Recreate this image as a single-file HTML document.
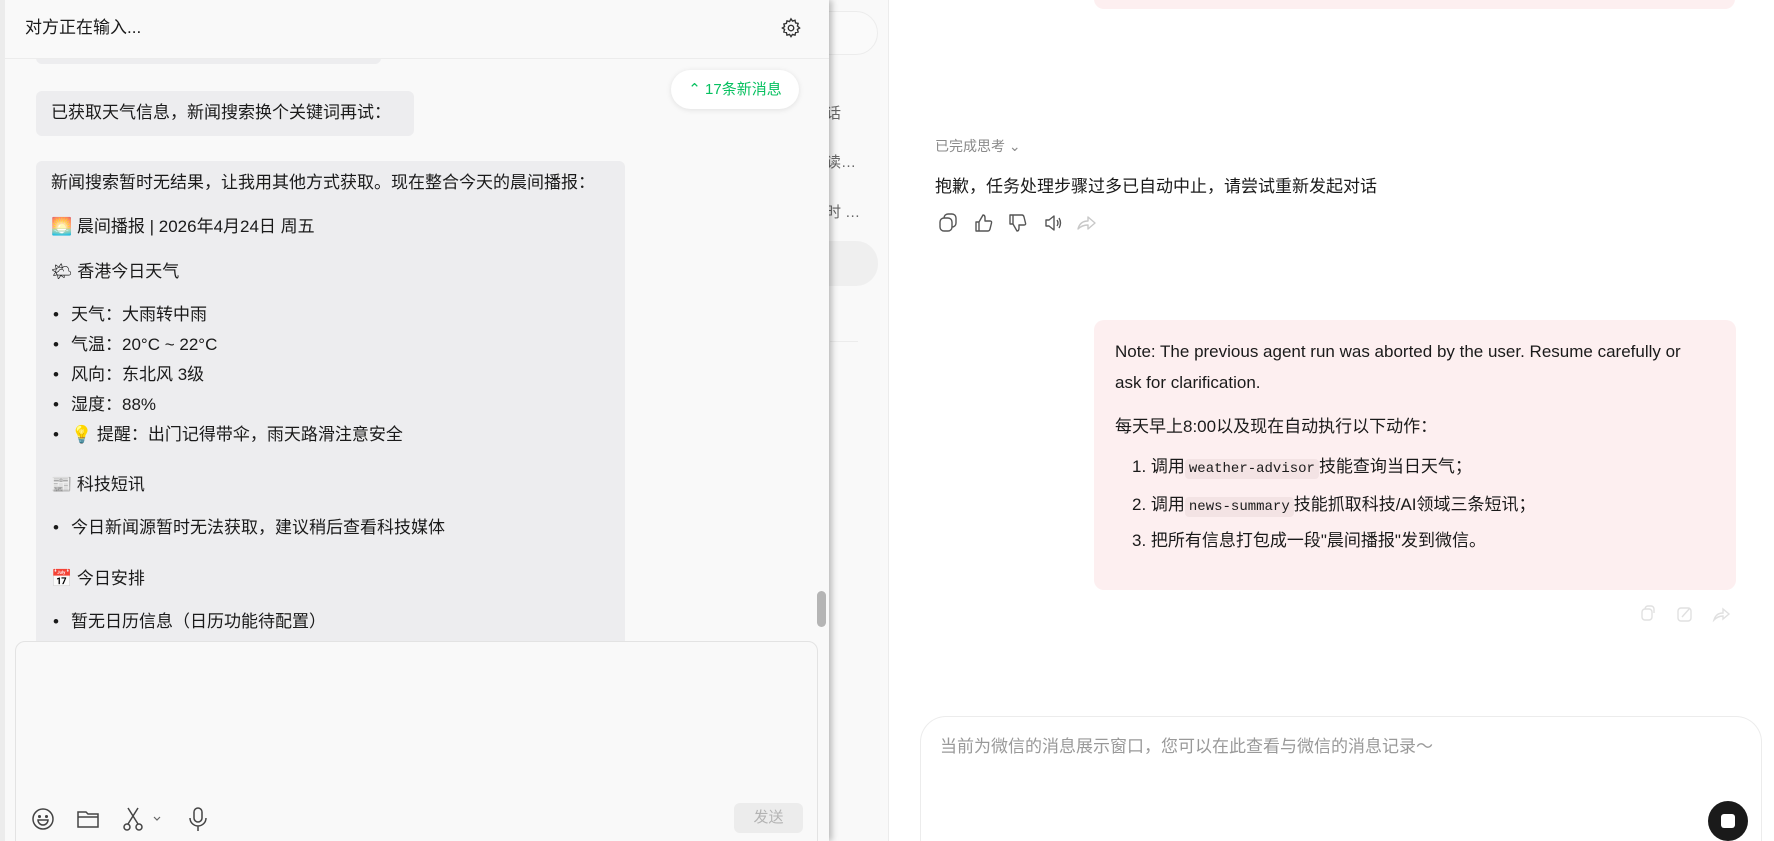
<!DOCTYPE html>
<html><head><meta charset="utf-8"><style>
*{margin:0;padding:0;box-sizing:border-box}
html,body{width:1774px;height:841px;overflow:hidden}
body{background:#fff;font-family:"Liberation Sans","Noto Sans CJK SC",sans-serif;color:#1a1a1a;position:relative}
.a{position:absolute}
.t{position:absolute;white-space:nowrap;font-size:17px;line-height:20px}
.b{position:absolute;font-size:17px;line-height:20px}
.mono{font-family:"Liberation Mono","Noto Sans CJK SC",monospace;font-size:14px;background:#f3e3e4;border-radius:4px;padding:2px 4px}
</style></head><body>
<div class="a" style="left:800px;top:0;width:89px;height:841px;background:#f9f9f9;border-right:1px solid #ececec"></div>
<div class="a" style="left:790px;top:11px;width:88px;height:44px;border:1px solid #ececec;border-radius:22px;background:#fafafa"></div>
<div class="a" style="left:790px;top:241px;width:88px;height:45px;border-radius:22px;background:#efefef"></div>
<div class="t" style="left:826px;top:104px;color:#666;font-size:15px">话</div>
<div class="t" style="left:826px;top:153px;color:#666;font-size:15px">读…</div>
<div class="t" style="left:826px;top:203px;color:#666;font-size:15px">时 …</div>
<div class="a" style="left:830px;top:341px;width:28px;height:1px;background:#ececec"></div>

<div class="a" style="left:0;top:0;width:829px;height:841px;background:#f9f9f9;box-shadow:3px 0 6px rgba(0,0,0,.25);border-left:5px solid #ececec;overflow:hidden">
 <div class="a" style="left:0;top:0;width:826px;height:59px;border-bottom:1px solid #ececec;background:#f9f9f9;z-index:3"></div>
 <div class="t" style="left:20px;top:18px;font-size:17px;z-index:4">对方正在输入...</div>
 <svg class="a" style="left:775px;top:17px;z-index:4" width="22" height="22" viewBox="0 0 24 24" fill="none" stroke="#333" stroke-width="1.5"><circle cx="12" cy="12" r="3"/><path d="M12 2l1.6 2.4 2.8-.8.6 2.8 2.8.6-.8 2.8L21.4 12l-2.4 1.6.8 2.8-2.8.6-.6 2.8-2.8-.8L12 21.4l-1.6-2.4-2.8.8-.6-2.8-2.8-.6.8-2.8L2.6 12l2.4-1.6-.8-2.8 2.8-.6.6-2.8 2.8.8z"/></svg>
 <div class="a" style="left:31px;top:40px;width:345px;height:24px;background:#ededef;border-radius:6px"></div>
 <div class="a" style="left:666px;top:70px;width:128px;height:39px;background:#fff;border-radius:20px;box-shadow:0 1px 6px rgba(0,0,0,.1);color:#07c160;font-size:15px;line-height:39px;text-align:center">⌃ 17条新消息</div>
 <div class="a" style="left:31px;top:91px;width:378px;height:45px;background:#ededef;border-radius:6px"></div>
 <div class="t" style="left:46px;top:103px">已获取天气信息，新闻搜索换个关键词再试：</div>
 <div class="a" style="left:31px;top:161px;width:589px;height:480px;background:#ededef;border-radius:6px 6px 0 0"></div>
 <div class="t" style="left:46px;top:173px">新闻搜索暂时无结果，让我用其他方式获取。现在整合今天的晨间播报：</div>
 <div class="t" style="left:46px;top:217px">🌅 晨间播报 | 2026年4月24日 周五</div>
 <div class="t" style="left:46px;top:262px">🌤 香港今日天气</div>
 <div class="b" style="left:48px;top:305px">•</div><div class="t" style="left:66px;top:305px">天气：大雨转中雨</div>
 <div class="b" style="left:48px;top:335px">•</div><div class="t" style="left:66px;top:335px">气温：20°C ~ 22°C</div>
 <div class="b" style="left:48px;top:365px">•</div><div class="t" style="left:66px;top:365px">风向：东北风 3级</div>
 <div class="b" style="left:48px;top:395px">•</div><div class="t" style="left:66px;top:395px">湿度：88%</div>
 <div class="b" style="left:48px;top:425px">•</div><div class="t" style="left:66px;top:425px">💡 提醒：出门记得带伞，雨天路滑注意安全</div>
 <div class="t" style="left:46px;top:475px">📰 科技短讯</div>
 <div class="b" style="left:48px;top:518px">•</div><div class="t" style="left:66px;top:518px">今日新闻源暂时无法获取，建议稍后查看科技媒体</div>
 <div class="t" style="left:46px;top:569px">📅 今日安排</div>
 <div class="b" style="left:48px;top:612px">•</div><div class="t" style="left:66px;top:612px">暂无日历信息（日历功能待配置）</div>
 <div class="a" style="left:812px;top:591px;width:9px;height:36px;background:#b5b5b5;border-radius:5px"></div>
 <div class="a" style="left:10px;top:641px;width:803px;height:210px;border:1px solid #e3e3e3;border-radius:10px;background:#f9f9f9"></div>
 <svg class="a" style="left:26px;top:807px" width="24" height="24" viewBox="0 0 24 24" fill="none" stroke="#444" stroke-width="1.5"><circle cx="12" cy="12" r="10"/><circle cx="8.5" cy="9.5" r=".8" fill="#444"/><circle cx="15.5" cy="9.5" r=".8" fill="#444"/><path d="M7 13h10a5 5 0 0 1-10 0z"/></svg>
 <svg class="a" style="left:71px;top:807px" width="24" height="24" viewBox="0 0 24 24" fill="none" stroke="#444" stroke-width="1.5"><path d="M2 5h8l2 2h10v13H2z M2 10h20"/></svg>
 <svg class="a" style="left:116px;top:806px" width="24" height="26" viewBox="0 0 24 26" fill="none" stroke="#444" stroke-width="1.5"><path d="M7 2l10 16M17 2L7 18"/><circle cx="6" cy="21" r="3"/><circle cx="18" cy="21" r="3"/></svg>
 <svg class="a" style="left:147px;top:815px" width="10" height="8" viewBox="0 0 10 8" fill="none" stroke="#666" stroke-width="1.2"><path d="M2 2l3 3 3-3"/></svg>
 <svg class="a" style="left:182px;top:806px" width="22" height="26" viewBox="0 0 22 26" fill="none" stroke="#444" stroke-width="1.5"><rect x="7" y="2" width="8" height="14" rx="4"/><path d="M3 12a8 8 0 0 0 16 0M11 20v5"/></svg>
 <div class="a" style="left:729px;top:803px;width:69px;height:30px;background:#ececec;border-radius:6px;color:#b3b3b3;font-size:15px;line-height:30px;text-align:center">发送</div>
</div>

<div class="a" style="left:1094px;top:-20px;width:641px;height:29px;background:#fdeff0;border-radius:10px"></div>
<div class="t" style="left:935px;top:136px;font-size:14px;color:#8a8a8a">已完成思考 ⌄</div>
<div class="t" style="left:935px;top:177px">抱歉，任务处理步骤过多已自动中止，请尝试重新发起对话</div>
<svg class="a" style="left:938px;top:212px" width="170" height="22" viewBox="0 0 170 22" fill="none" stroke="#555" stroke-width="1.4" stroke-linejoin="round">
<rect x="2" y="6" width="12" height="13" rx="4"/><path d="M6 6a4 4 0 0 1 4-4h4a4 4 0 0 1 4 4v5a4 4 0 0 1-4 4"/>
<path d="M38 10h3v9h-3zM41 10l4-7q2 0 2 3v3h5q2 0 1.5 2l-1.5 6q-.5 2-2 2H41"/>
<path d="M74 12h3V3h-3zM77 12l4 7q2 0 2-3v-3h5q2 0 1.5-2L88 5q-.5-2-2-2h-9" transform="translate(-2 0)"/>
<path d="M108 8h3l5-4v14l-5-4h-3zM119 8q2 3 0 6M121 6q3 5 0 10"/>
<path stroke="#c8c8c8" d="M140 17q2-8 10-8V5l7 6-7 6v-4q-6 0-10 4z"/>
</svg>
<div class="a" style="left:1094px;top:320px;width:642px;height:270px;background:#fdeff0;border-radius:10px"></div>
<div class="t" style="left:1115px;top:336px;line-height:31px;font-size:17px">Note: The previous agent run was aborted by the user. Resume carefully or<br>ask for clarification.</div>
<div class="t" style="left:1115px;top:417px">每天早上8:00以及现在自动执行以下动作：</div>
<div class="t" style="left:1132px;top:457px">1. 调用<span class="mono">weather-advisor</span>技能查询当日天气；</div>
<div class="t" style="left:1132px;top:495px">2. 调用<span class="mono">news-summary</span>技能抓取科技/AI领域三条短讯；</div>
<div class="t" style="left:1132px;top:531px">3. 把所有信息打包成一段"晨间播报"发到微信。</div>
<svg class="a" style="left:1640px;top:604px" width="95" height="20" viewBox="0 0 95 20" fill="none" stroke="#e0e0e0" stroke-width="1.4"><rect x="2" y="5" width="10" height="11" rx="3"/><path d="M5 5a3 3 0 0 1 3-3h3a3 3 0 0 1 3 3v4"/><rect x="38" y="4" width="13" height="13" rx="3"/><path d="M42 13l8-9"/><path d="M74 16q2-7 9-7V5l6 5-6 5v-3q-5 0-9 4z"/></svg>
<div class="a" style="left:920px;top:716px;width:842px;height:125px;border:1px solid #ececec;border-bottom:none;border-radius:26px 26px 0 0;background:#fff"></div>
<div class="t" style="left:940px;top:737px;color:#999;font-size:17px">当前为微信的消息展示窗口，您可以在此查看与微信的消息记录～</div>
<div class="a" style="left:1708px;top:801px;width:40px;height:40px;border-radius:50%;background:#1a1a1a"></div>
<div class="a" style="left:1721px;top:814px;width:14px;height:14px;border-radius:3px;background:#fff"></div>
</body></html>
